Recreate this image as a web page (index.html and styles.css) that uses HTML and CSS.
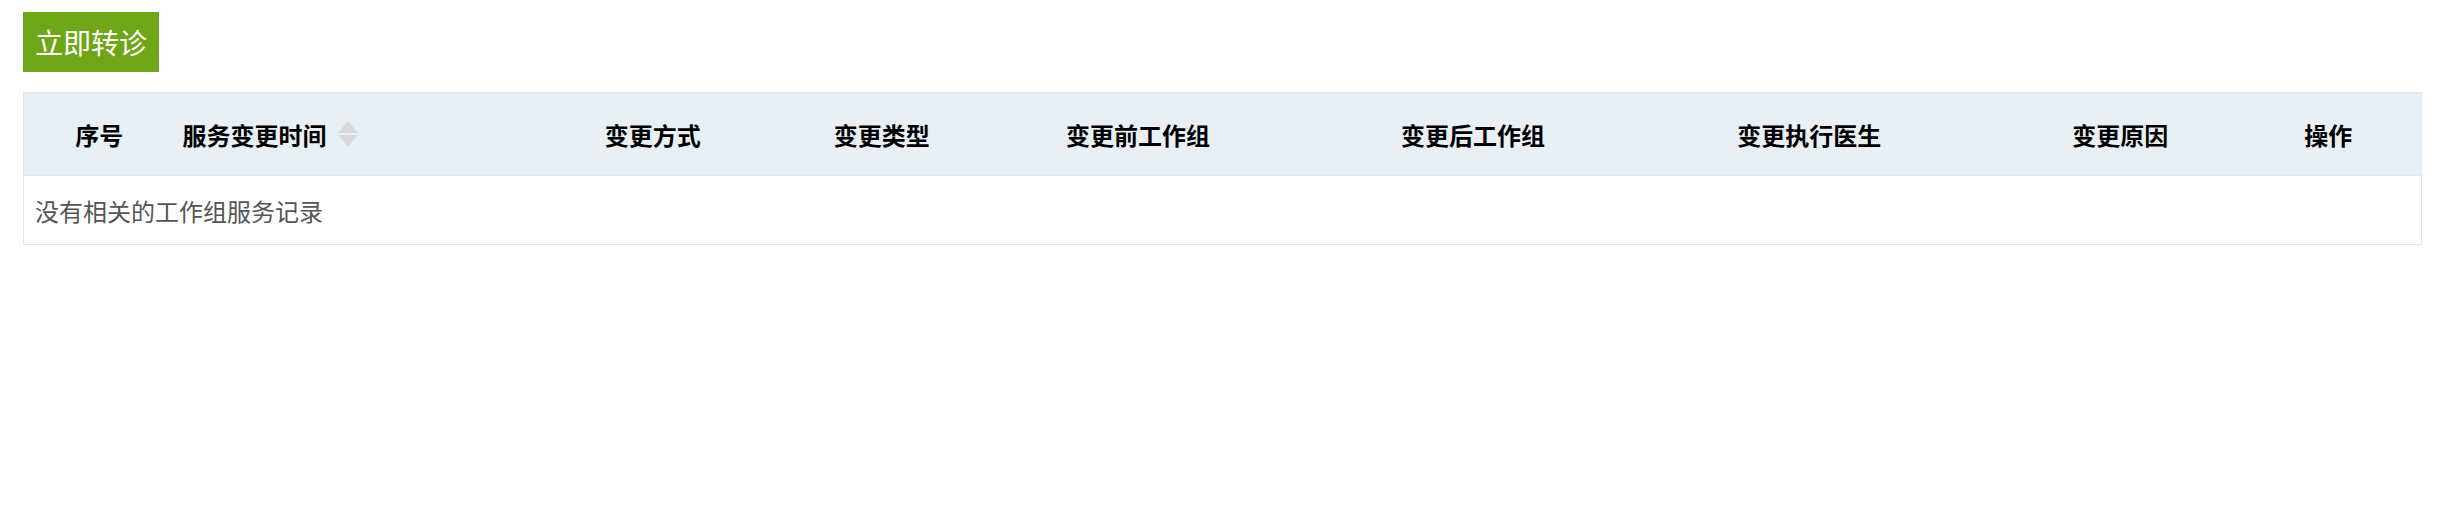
FILE: index.html
```html
<!DOCTYPE html>
<html lang="zh">
<head>
<meta charset="utf-8">
<link rel="stylesheet" href="styles.css">
</head>
<body>
<div class="page">
  <button class="btn-transfer">立即转诊</button>
  <table class="records">
    <colgroup>
      <col class="c1"><col class="c2"><col class="c3"><col class="c4"><col class="c5"><col class="c6"><col class="c7"><col class="c8"><col class="c9">
    </colgroup>
    <thead>
      <tr>
        <th>序号</th>
        <th class="left"><span class="sortable">服务变更时间<span class="sort-icon"><i class="up"></i><i class="down"></i></span></span></th>
        <th>变更方式</th>
        <th>变更类型</th>
        <th>变更前工作组</th>
        <th>变更后工作组</th>
        <th>变更执行医生</th>
        <th>变更原因</th>
        <th>操作</th>
      </tr>
    </thead>
    <tbody>
      <tr><td colspan="9" class="empty">没有相关的工作组服务记录</td></tr>
    </tbody>
  </table>
</div>
</body>
</html>
```
FILE: styles.css
```css
html, body { margin: 0; padding: 0; background: #fff; }
body { font-family: "Noto Sans CJK SC", "Microsoft YaHei", sans-serif; }
.page { padding: 12px 34px 0 23px; }
.btn-transfer {
  display: block;
  height: 60px;
  width: 136px;
  padding: 0;
  border: 0;
  background: #6fa617;
  color: #fff;
  font-family: inherit;
  font-size: 28px;
  line-height: 60px;
  text-align: center;
}
.records {
  margin-top: 20px;
  width: 100%;
  table-layout: fixed;
  border-collapse: collapse;
  border: 1px solid #e6e6e6;
}
.c1 { width: 151px; } .c2 { width: 310px; } .c3 { width: 336px; }
.c4 { width: 122px; } .c5 { width: 390px; } .c6 { width: 280px; }
.c7 { width: 392px; } .c8 { width: 230px; } .c9 { width: 186px; }
.records th {
  height: 82px;
  padding: 0;
  background: #e8f0f6;
  color: #000;
  font-size: 24px;
  font-weight: bold;
  text-align: center;
  vertical-align: middle;
}
.records th.left { text-align: left; padding-left: 8px; }
.sortable { display: inline-flex; align-items: center; gap: 11px; }
.sort-icon { display: inline-flex; flex-direction: column; gap: 2px; }
.sort-icon i { display: block; width: 0; height: 0; border-left: 10px solid transparent; border-right: 10px solid transparent; }
.sort-icon .up { border-bottom: 12px solid #d9d9d9; }
.sort-icon .down { border-top: 12px solid #d9d9d9; }
.records td.empty {
  height: 68px;
  padding: 0 11px;
  font-size: 24px;
  color: #555;
  vertical-align: middle;
  border-top: 1px solid #e6e6e6;
}
```
